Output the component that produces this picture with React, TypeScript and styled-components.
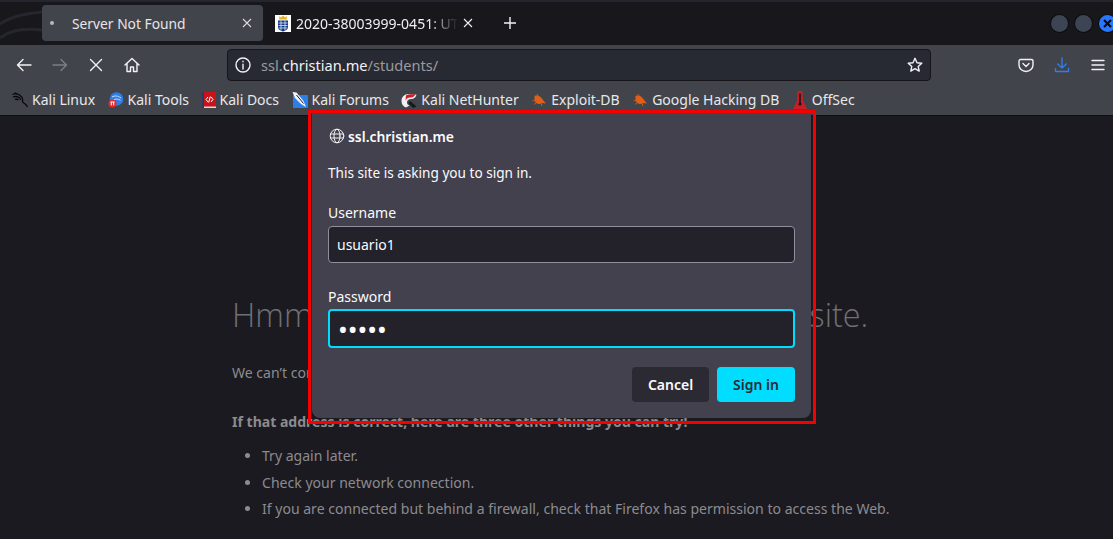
import React from "react";
import styled, { createGlobalStyle } from "styled-components";

const Global = createGlobalStyle`
  html, body { margin: 0; padding: 0; background: #1b1a20; }
  body { width: 1113px; height: 539px; overflow: hidden; font-family: "Noto Sans", "Liberation Sans", sans-serif; }
  * { box-sizing: border-box; }
`;

const Browser = styled.div`
  position: relative;
  width: 1113px;
  height: 539px;
  overflow: hidden;
  display: flex;
  flex-direction: column;
`;

const TabBar = styled.div`
  position: relative;
  height: 45px;
  flex: none;
  display: flex;
  align-items: flex-start;
  padding: 3px 0 0 42px;
  background: #17171c;
  border-top: 2px solid #25252f;
`;

const Wallpaper = styled.svg`
  position: absolute;
  left: 0;
  top: 0;
  width: 42px;
  height: 43px;
`;

const ActiveTab = styled.div`
  position: relative;
  width: 221px;
  height: 36px;
  flex: none;
  display: flex;
  align-items: center;
  padding: 0 11px 0 8px;
  border-radius: 4px;
  background: #42444c;
  color: #e6e6e8;
  font-size: 13.8px;
`;

const TabDot = styled.span`
  width: 4px;
  height: 4px;
  border-radius: 50%;
  background: #b8b9bd;
  margin-right: 18px;
  flex: none;
`;

const TabTitle = styled.span<{ $fade?: boolean }>`
  flex: 1;
  overflow: hidden;
  white-space: nowrap;
  ${(p) =>
    p.$fade &&
    `-webkit-mask-image: linear-gradient(to right, #000 82%, transparent 100%);
     mask-image: linear-gradient(to right, #000 82%, transparent 100%);`}
`;

const InactiveTab = styled.div`
  width: 221px;
  height: 36px;
  flex: none;
  display: flex;
  align-items: center;
  gap: 5px;
  padding: 0 11px 0 12px;
  color: #f0f0f2;
  font-size: 14px;
`;

const NewTab = styled.div`
  width: 30px;
  height: 36px;
  display: flex;
  align-items: center;
  justify-content: center;
  margin-left: 11px;
  color: #f4f4f6;
`;

const WindowControls = styled.div`
  margin-left: auto;
  margin-right: -2px;
  height: 36px;
  display: flex;
  align-items: center;
  gap: 7px;
`;

const WinBtn = styled.div<{ $close?: boolean }>`
  width: 17px;
  height: 17px;
  border-radius: 50%;
  background: ${(p) => (p.$close ? "#2777ff" : "#3d4454")};
  box-shadow: 0 0 0 1px #0d0d11;
  display: flex;
  align-items: center;
  justify-content: center;
  flex: none;
  margin-right: ${(p) => (p.$close ? "-1px" : "0")};
`;

const Toolbar = styled.div`
  height: 40px;
  flex: none;
  display: flex;
  align-items: center;
  background: #42444c;
`;

const NavButton = styled.div<{ $w?: number }>`
  width: ${(p) => p.$w ?? 36}px;
  height: 32px;
  flex: none;
  display: flex;
  align-items: center;
  justify-content: center;
`;

const NavCluster = styled.div`
  width: 227px;
  flex: none;
  display: flex;
  padding-left: 6px;
`;

const UrlBar = styled.div`
  width: 704px;
  height: 32px;
  flex: none;
  display: flex;
  align-items: center;
  padding: 0 7px;
  background: #282a33;
  border: 1px solid #15151a;
  border-radius: 4px;
  font-size: 14.6px;
`;

const UrlText = styled.div`
  flex: 1;
  margin-left: 10px;
  color: #9a9ba0;
  white-space: nowrap;
  b { font-weight: 400; color: #f2f2f4; }
`;

const RightTools = styled.div`
  display: flex;
  margin-left: 77px;
`;

const Bookmarks = styled.div`
  height: 31px;
  flex: none;
  display: flex;
  align-items: center;
  gap: 12.5px;
  padding: 0 0 1px 12px;
  background: #42444c;
  border-bottom: 1px solid #101014;
`;

const Bookmark = styled.div`
  display: flex;
  align-items: center;
  gap: 4px;
  color: #e8e8ea;
  font-size: 14px;
  white-space: nowrap;
`;

const Page = styled.main`
  flex: 1;
  background: #1b1a20;
  padding: 175px 0 0 232px;
  color: #8b8b90;
  font-size: 14.05px;
`;

const PageTitle = styled.h1`
  margin: 0;
  font-family: "Open Sans", sans-serif;
  font-weight: 300;
  font-size: 32.4px;
  line-height: 46px;
  color: #6f6f75;
  white-space: nowrap;
`;

const PageText = styled.p`
  margin: 26px 0 0;
  line-height: 20px;
  white-space: nowrap;
`;

const PageStrong = styled(PageText)`
  margin-top: 29px;
  font-weight: 700;
`;

const PageList = styled.ul`
  margin: 14px 0 0;
  padding: 0 0 0 30px;
  li { line-height: 20px; margin-bottom: 6.5px; white-space: nowrap; }
`;

const Dialog = styled.section`
  position: absolute;
  left: 312px;
  top: 113px;
  width: 499px;
  height: 305px;
  padding: 14px 16px 16px;
  background: #42414d;
  border-radius: 0 0 8px 8px;
  color: #fbfbfe;
  font-size: 14px;
  box-shadow: -1px 0 0 #15141a;
`;

const RedFrame = styled.div`
  position: absolute;
  left: 308px;
  top: 110px;
  width: 508px;
  height: 314px;
  border: 3px solid #f40000;
  pointer-events: none;
`;

const DialogHead = styled.div`
  display: flex;
  align-items: center;
  gap: 3px;
  height: 18px;
  font-weight: 600;
  font-size: 13.9px;
  padding-left: 1px;
`;

const DialogText = styled.p`
  margin: 18px 0 0;
  font-size: 13.6px;
  line-height: 20px;
`;

const FieldLabel = styled.label`
  display: block;
  line-height: 20px;
`;

const Field = styled.div<{ $top: number }>`
  margin-top: ${(p) => p.$top}px;
`;

const TextInput = styled.input<{ $focus?: boolean }>`
  display: block;
  width: 467px;
  height: ${(p) => (p.$focus ? 39 : 37)}px;
  margin-top: ${(p) => (p.$focus ? 2 : 3)}px;
  padding: 0 8px;
  border-radius: 4px;
  background: #23222b;
  color: #fbfbfe;
  outline: none;
  font: ${(p) => (p.$focus ? 26 : 14)}px "Noto Sans", sans-serif;
  border: ${(p) => (p.$focus ? "2px solid #00ddff" : "1px solid #8f8f9d")};
`;

const Actions = styled.div`
  display: flex;
  justify-content: flex-end;
  gap: 8px;
  margin-top: 19px;
`;

const Button = styled.button<{ $primary?: boolean }>`
  width: ${(p) => (p.$primary ? 78 : 77)}px;
  height: 35px;
  border: 0;
  border-radius: 4px;
  font: 600 14px "Noto Sans", sans-serif;
  background: ${(p) => (p.$primary ? "#00ddff" : "#2b2a33")};
  color: ${(p) => (p.$primary ? "#2b2a33" : "#fbfbfe")};
`;

const stroke = { fill: "none", stroke: "currentColor", strokeWidth: 1.4, strokeLinecap: "round", strokeLinejoin: "round" } as const;

const Ico = ({ color = "#f2f2f4", size = 16, children }: { color?: string; size?: number; children: React.ReactNode }) => (
  <svg width={size} height={size} viewBox="0 0 16 16" style={{ color, display: "block", flex: "none" }} {...stroke}>
    {children}
  </svg>
);

const CloseIco = ({ size = 10, color = "#d8d8da" }: { size?: number; color?: string }) => (
  <svg width={size} height={size} viewBox="0 0 10 10" style={{ flex: "none" }} fill="none" stroke={color} strokeWidth="1.1">
    <path d="M1 1l8 8M9 1L1 9" />
  </svg>
);

const Crest = () => (
  <svg width="16" height="17" viewBox="0 0 16 17" style={{ flex: "none" }}>
    <rect width="16" height="17" fill="#fff" />
    <path d="M4.500 1l1.500 1.500L8 .6l2 1.900L11.500 1l.5 3.500H4z" fill="#e8b21f" />
    <path d="M3 5.500h10v7c0 2-3 3.500-5 4-2-.5-5-2-5-4z" fill="#173a86" />
    <path d="M3.500 8h9M3.500 10.500h9M3.500 13h9M6 5.500v10M10 5.500v10" stroke="#dfe7f5" strokeWidth=".8" />
  </svg>
);

const KaliIcon = () => (
  <svg width="16" height="16" viewBox="0 0 16 16" fill="none" stroke="#08080a" strokeWidth="1.300" style={{ flex: "none" }}>
    <path d="M.5 2.500C3 1 5.500 1.500 7.500 3c2.500 1.800 3.500 3 3 5-.3 1.500.8 3 2 3.500 1 .5 2 1.500 3 3.500" />
    <path d="M3 .8l2 1.400M1 5c2-.8 4-.6 6 .5 1 .6 1.500 1.500 1.200 2.500" />
    <path d="M3 7.500c1.200-.4 2.500-.2 3.500.6" />
  </svg>
);

const ToolsIcon = () => (
  <svg width="16" height="16" viewBox="0 0 16 16" style={{ flex: "none" }}>
    <circle cx="8.500" cy="7" r="6.800" fill="#2f7ee8" />
    <path d="M4 5c3-1.500 5.500-1.500 9 1M5.500 8c2-1.500 4.500-1.200 7 .3" stroke="#cfe3fb" strokeWidth="1" fill="none" />
    <circle cx="4.500" cy="11.500" r="4" fill="#e02b2b" />
    <path d="M3.300 10v3.300M5.700 10v3.300M2.500 10h4" stroke="#fff" strokeWidth="1" />
  </svg>
);

const DocsIcon = () => (
  <svg width="14" height="16" viewBox="0 0 14 16" style={{ flex: "none" }}>
    <rect x="1" y="0" width="13" height="15" fill="#c8131a" />
    <rect x="0" y="0" width="2" height="16" fill="#2c3a63" />
    <rect x="2" y="14.500" width="12" height="1.500" fill="#d8d8d8" />
    <path d="M6 5L4 7.500 6 10M9 5l2 2.500L9 10M8.300 4.500L6.700 10.500" stroke="#fff" strokeWidth="1" fill="none" />
  </svg>
);

const ForumsIcon = () => (
  <svg width="16" height="16" viewBox="0 0 16 16" style={{ flex: "none" }}>
    <path d="M1 3h14a1 1 0 0 1 1 1v11a1 1 0 0 1-1 1H1z" fill="#2c7fe8" />
    <path d="M.5 0l4 .5 7 8.500 2.500 6-5-3L3 6z" fill="#f2f4f8" />
    <path d="M4.500 3l7 8.500" stroke="#1c1c22" strokeWidth="1" />
  </svg>
);

const NetHunterIcon = () => (
  <svg width="16" height="16" viewBox="0 0 16 16" style={{ flex: "none" }}>
    <path d="M.5 9c0-4 3-7 7-7 2.500 0 5.500 1 8 .5-1 3.500-3 4.500-5.500 4.500C7.500 7 6 8.500 6 10.500c0 1.500 1 2.500 2.500 3L5 15.500C2 14.500.5 12 .5 9z" fill="#f1f1f3" />
    <path d="M5 3.500c2-1.500 6-1.500 9.500-1-1.500 2.300-3 3.300-5.500 3C7 5.500 5.500 6.500 4.500 8.500z" fill="#c9202b" />
    <path d="M9 9l6.500 5.500-3.500 1.500L7.500 11z" fill="#17171b" />
  </svg>
);

const BugIcon = () => (
  <svg width="16" height="16" viewBox="0 0 16 16" style={{ flex: "none" }}>
    <path d="M3.500 4c3.500-1.500 6.500.5 8.500 4l3 3.500-4-.5c-3 2-6.500.5-7.500-2.500z" fill="#df5f18" />
    <path d="M1.500 9l2.500-1M3 12.500l2.500-2M11 14l-1-3M6 2l1 2" stroke="#c9591c" strokeWidth="1" />
  </svg>
);

const OffSecIcon = () => (
  <svg width="16" height="18" viewBox="0 0 16 18" style={{ flex: "none" }}>
    <path d="M5.500 0h5l.5 10 4 8H1l4-8z" fill="#c81e26" />
    <path d="M8 2.500v10" stroke="#16161a" strokeWidth="1.600" />
    <circle cx="8" cy="13" r="1.600" fill="#16161a" />
  </svg>
);

const bookmarks: [React.ReactNode, string][] = [
  [<KaliIcon />, "Kali Linux"],
  [<ToolsIcon />, "Kali Tools"],
  [<DocsIcon />, "Kali Docs"],
  [<ForumsIcon />, "Kali Forums"],
  [<NetHunterIcon />, "Kali NetHunter"],
  [<BugIcon />, "Exploit-DB"],
  [<BugIcon />, "Google Hacking DB"],
  [<OffSecIcon />, "OffSec"],
];

export default function App() {
  return (
    <Browser>
      <Global />
      <TabBar>
        <Wallpaper viewBox="0 0 42 43" fill="none" stroke="#26262d" strokeWidth="3">
          <path d="M0 22C12 14 24 12 42 10" />
          <path d="M0 36C10 28 24 26 42 28" />
        </Wallpaper>
        <ActiveTab>
          <TabDot />
          <TabTitle>Server Not Found</TabTitle>
          <CloseIco />
        </ActiveTab>
        <InactiveTab>
          <Crest />
          <TabTitle $fade>2020-38003999-0451: UTN</TabTitle>
          <CloseIco color="#f0f0f2" />
        </InactiveTab>
        <NewTab>
          <svg width="12" height="12" viewBox="0 0 12 12" stroke="currentColor" strokeWidth="1.4">
            <path d="M6 0v12M0 6h12" />
          </svg>
        </NewTab>
        <WindowControls>
          <WinBtn />
          <WinBtn />
          <WinBtn $close>
            <svg width="9" height="9" viewBox="0 0 9 9" stroke="#0c0c10" strokeWidth="2.200" fill="none">
              <path d="M1 1l7 7M8 1L1 8" />
            </svg>
          </WinBtn>
        </WindowControls>
      </TabBar>
      <Toolbar>
        <NavCluster>
          <NavButton>
            <Ico><path d="M15 8H1.500M7 2.500L1.500 8 7 13.500" /></Ico>
          </NavButton>
          <NavButton>
            <Ico color="#7d7e84"><path d="M1 8h13.500M9 2.500L14.500 8 9 13.500" /></Ico>
          </NavButton>
          <NavButton>
            <Ico><path d="M2.500 2.500l11 11M13.500 2.500l-11 11" /></Ico>
          </NavButton>
          <NavButton>
            <Ico><path d="M1 8L8 1.500 15 8M3 6.500V14.500h3.500V10h3v4.500H13V6.500" /></Ico>
          </NavButton>
        </NavCluster>
        <UrlBar>
          <Ico>
            <circle cx="8" cy="8" r="7" />
            <path d="M8 7.200V12M8 4.200v.6" />
          </Ico>
          <UrlText>ssl.<b>christian.me</b>/students/</UrlText>
          <Ico>
            <path d="M8 1.300l2 4.400 4.800.5-3.600 3.200 1 4.700L8 11.700l-4.200 2.400 1-4.700L1.200 6.200 6 5.700z" />
          </Ico>
        </UrlBar>
        <RightTools>
          <NavButton>
            <Ico>
              <path d="M2.500 2.500h11A1.500 1.500 0 0 1 15 4v4a7 6.500 0 0 1-14 0V4A1.500 1.500 0 0 1 2.500 2.500z" />
              <path d="M5 6.500l3 3 3-3" />
            </Ico>
          </NavButton>
          <NavButton>
            <Ico color="#2f7dea">
              <path d="M8 1v10M3.800 7L8 11l4.200-4M1.500 11.500v3h13v-3" />
            </Ico>
          </NavButton>
          <NavButton>
            <Ico><path d="M2 3.500h12M2 8h12M2 12.500h12" /></Ico>
          </NavButton>
        </RightTools>
      </Toolbar>
      <Bookmarks>
        {bookmarks.map(([icon, name]) => (
          <Bookmark key={name}>
            {icon}
            {name}
          </Bookmark>
        ))}
      </Bookmarks>
      <Page>
        <PageTitle>Hmm. We’re having trouble finding that site.</PageTitle>
        <PageText>We can’t connect to the server at ssl.christian.me.</PageText>
        <PageStrong>If that address is correct, here are three other things you can try!</PageStrong>
        <PageList>
          <li>Try again later.</li>
          <li>Check your network connection.</li>
          <li>If you are connected but behind a firewall, check that Firefox has permission to access the Web.</li>
        </PageList>
      </Page>
      <Dialog>
        <DialogHead>
          <Ico size={16}>
            <circle cx="8" cy="8" r="6.800" strokeWidth="1" />
            <ellipse cx="8" cy="8" rx="3" ry="6.800" strokeWidth="1" />
            <path d="M1.500 6h13M1.500 10h13" strokeWidth="1" />
          </Ico>
          ssl.christian.me
        </DialogHead>
        <DialogText>This site is asking you to sign in.</DialogText>
        <Field $top={20}>
          <FieldLabel>Username</FieldLabel>
          <TextInput type="text" readOnly defaultValue="usuario1" />
        </Field>
        <Field $top={24}>
          <FieldLabel>Password</FieldLabel>
          <TextInput $focus type="password" readOnly defaultValue="12345" />
        </Field>
        <Actions>
          <Button>Cancel</Button>
          <Button $primary>Sign in</Button>
        </Actions>
      </Dialog>
      <RedFrame />
    </Browser>
  );
}
